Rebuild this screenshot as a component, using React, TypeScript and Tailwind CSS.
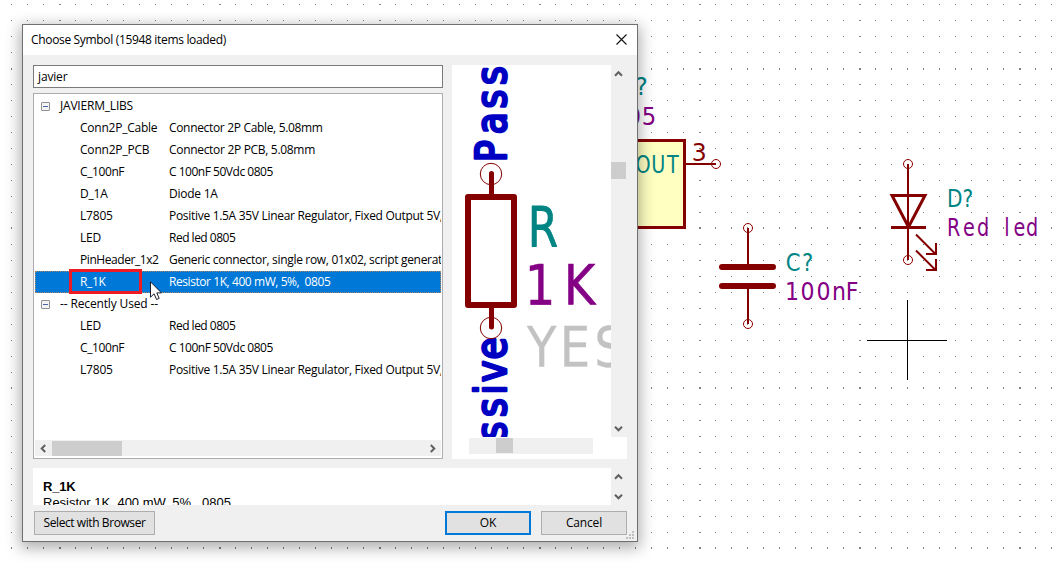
import type { ReactNode } from "react";

type Row = { name: string; desc?: string; nt?: string; dt?: string; group?: boolean; selected?: boolean };

const rows: Row[] = [
  { name: "JAVIERM_LIBS", group: true, nt: "tracking-[-0.2px]" },
  { name: "Conn2P_Cable", desc: "Connector 2P Cable, 5.08mm", nt: "tracking-[-0.24px]", dt: "tracking-[-0.33px]" },
  { name: "Conn2P_PCB", desc: "Connector 2P PCB, 5.08mm", dt: "tracking-[-0.31px]" },
  { name: "C_100nF", desc: "C 100nF 50Vdc 0805", nt: "tracking-[-0.4px]", dt: "tracking-[-0.48px]" },
  { name: "D_1A", desc: "Diode 1A", dt: "tracking-[-0.25px]" },
  { name: "L7805", desc: "Positive 1.5A 35V Linear Regulator, Fixed Output 5V,", dt: "tracking-[-0.3px]" },
  { name: "LED", desc: "Red led 0805", dt: "tracking-[-0.5px]" },
  { name: "PinHeader_1x2", desc: "Generic connector, single row, 01x02, script generated", nt: "tracking-[-0.43px]", dt: "tracking-[-0.32px]" },
  { name: "R_1K", desc: "Resistor 1K, 400 mW, 5%,\u00a0 0805", nt: "tracking-[-0.35px]", dt: "tracking-[-0.43px]", selected: true },
  { name: "-- Recently Used --", group: true, nt: "tracking-[-0.14px]" },
  { name: "LED", desc: "Red led 0805", dt: "tracking-[-0.5px]" },
  { name: "C_100nF", desc: "C 100nF 50Vdc 0805", nt: "tracking-[-0.4px]", dt: "tracking-[-0.48px]" },
  { name: "L7805", desc: "Positive 1.5A 35V Linear Regulator, Fixed Output 5V,", dt: "tracking-[-0.3px]" },
];

// Left side bearings of the label font, in em.
const bearing: Record<string, number> = {
  C: 0.056, "?": 0.07, "1": 0.11, "0": 0.066, n: 0.09, F: 0.098, D: 0.098, R: 0.098, e: 0.055, d: 0.055,
  l: 0.094, O: 0.056, U: 0.087, T: 0, "5": 0.08, "3": 0.076, K: 0.098, Y: 0, E: 0.098, S: 0.066, P: 0.098,
  a: 0.06, s: 0.054, i: 0.094, v: 0.03, " ": 0,
};

function Label({ text, at, y, size = 24, sx = 0.8, color, weight = 0, vertical = false }: {
  text: string; at: number[]; y: number; size?: number; sx?: number; color: string; weight?: number; vertical?: boolean;
}) {
  const xs = at.map((x, i) => (x / sx - (bearing[text[i]] ?? 0) * size).toFixed(2)).join(" ");
  const transform = vertical ? `translate(${y} 0) rotate(-90) scale(${sx} 1)` : `translate(0 ${y}) scale(${sx} 1)`;
  return (
    <text
      x={xs} y={0} transform={transform} fontSize={size} fill={color} stroke={color} strokeWidth={weight}
      strokeLinejoin="round" xmlSpace="preserve" className="font-['DejaVu_Sans',sans-serif]"
    >
      {text}
    </text>
  );
}

const dotXs = Array.from({ length: 66 }, (_, i) => 11 + i * 16);
const dotYs = Array.from({ length: 35 }, (_, i) => 4 + i * 16);

function Schematic() {
  return (
    <svg width="1053" height="563" className="block" fill="none" stroke="#840000">
      <g fill="#808080" stroke="none" shapeRendering="crispEdges">
        {dotYs.map((y) =>
          dotXs.map((x) => {
            const wide = x % 160 === 59;
            const tall = y % 160 === 68;
            return <rect key={`${x}-${y}`} x={x} y={tall && y > 68 ? y - 1 : y} width={wide ? 2 : 1} height={tall ? 2 : 1} />;
          }),
        )}
      </g>
      <rect x="560" y="140.5" width="124.5" height="87" fill="#ffffc2" strokeWidth="3" />
      <path d="M686 164H716" strokeWidth="2" />
      <circle cx="716" cy="164" r="4.5" />
      <Label text="?" at={[637]} y={95} sx={0.98} color="#008484" />
      <Label text="05" at={[628, 643.5]} y={125} sx={0.95} color="#840084" />
      <Label text="OUT" at={[636.5, 653, 667]} y={173} color="#008484" />
      <Label text="3" at={[693.5]} y={161} sx={0.98} color="#840000" />

      <path d="M748 228V264M748 289V324" strokeWidth="2" />
      <path d="M722 267H773M722 286H773" strokeWidth="6" strokeLinecap="round" />
      <circle cx="748" cy="228" r="4.5" />
      <circle cx="748" cy="324" r="4.5" />
      <Label text="C?" at={[787, 803.5]} y={270.5} sx={0.88} color="#008484" />
      <Label text="100nF" at={[787.5, 802, 818, 834, 848]} y={299.7} sx={0.92} color="#840084" />

      <path d="M908 164V260" strokeWidth="2" />
      <path d="M892 195.5H925L908.5 227Z" strokeWidth="3" strokeLinejoin="miter" />
      <path d="M891 227.5H926" strokeWidth="3" />
      <circle cx="908" cy="164" r="4.5" />
      <circle cx="908" cy="260" r="4.5" />
      <path d="M916 234.5L935.5 254M926 254H936V243M916 250.5L935.5 270M926 270H936V259" strokeWidth="2" />
      <Label text="D?" at={[949, 964]} y={206.7} sx={0.84} color="#008484" />
      <Label text="Red led" at={[949, 964, 978, 990, 1006, 1014.5, 1027]} y={236} color="#840084" />

      <path d="M867 340.5H947M907.5 300V380" stroke="#000" shapeRendering="crispEdges" />
    </svg>
  );
}

function Preview() {
  return (
    <svg width="159" height="372" viewBox="452 65 159 372" className="block bg-white" fill="none" stroke="#840000">
      <Label text="Pass" at={[-158.5, -132, -106.5, -83]} y={505.7} size={42} sx={0.86} weight={2.8} color="#0000c2" vertical />
      <Label text="ssive" at={[-438.5, -415, -391, -381, -357.5]} y={505.7} size={42} sx={0.86} weight={2.8} color="#0000c2" vertical />
      <circle cx="491" cy="174" r="10.7" strokeWidth="1" />
      <circle cx="491" cy="328" r="10.7" strokeWidth="1" />
      <path d="M491.5 173.5V196M491.5 306V327" strokeWidth="5" strokeLinecap="round" />
      <rect x="468" y="197" width="46" height="108" strokeWidth="6" strokeLinejoin="round" />
      <Label text="R" at={[532]} y={246} size={56} sx={0.78} weight={0.8} color="#008484" />
      <Label text="1K" at={[530, 568.5]} y={304} size={56} sx={0.86} weight={0.6} color="#840084" />
      <Label text="YES" at={[527, 564.5, 597.5]} y={365.5} size={56} sx={0.86} weight={0.3} color="#c2c2c2" />
    </svg>
  );
}

function Chevron({ dir }: { dir: "up" | "down" | "left" | "right" }) {
  const d = {
    up: "M1 5.7L4.5 2.2L8 5.7",
    down: "M1 2.8L4.5 6.3L8 2.8",
    left: "M6.2 1L2.7 4.5L6.2 8",
    right: "M2.8 1L6.3 4.5L2.8 8",
  }[dir];
  return (
    <svg width="9" height="9" viewBox="0 0 9 9" fill="none" stroke="#606060" strokeWidth="2">
      <path d={d} />
    </svg>
  );
}

function Button({ children, className }: { children: ReactNode; className: string }) {
  return <button className={`flex h-6 items-center justify-center bg-[#e1e1e1] pb-px ${className}`}>{children}</button>;
}

function TreeRow({ row }: { row: Row }) {
  if (row.group) {
    return (
      <div className="flex h-[22px] items-center pl-1.5">
        <span className="flex size-[9px] items-center justify-center rounded-[1px] border border-[#919191] bg-[#f4f4f4]">
          <span className="h-px w-[5px] bg-[#4b63a7]" />
        </span>
        <span className={`ml-2.5 pb-px whitespace-pre ${row.nt ?? "tracking-[-0.2px]"}`}>{row.name}</span>
      </div>
    );
  }
  return (
    <div
      className={`relative flex h-[22px] items-center pl-[45px] whitespace-pre ${
        row.selected ? "bg-[#0078d7] text-white outline-1 -outline-offset-1 outline-dotted outline-[#e58a3c]/75" : ""
      }`}
    >
      <span className={`w-[89px] shrink-0 pb-px ${row.nt ?? "tracking-[-0.2px]"}`}>{row.name}</span>
      <span className={`pb-px ${row.dt ?? "tracking-[-0.2px]"}`}>{row.desc}</span>
      {row.selected && (
        <>
          <span className="absolute -top-0.5 left-[34px] z-10 h-[25px] w-[73px] border-[3px] border-[#ed1c24]" />
          <svg className="absolute top-[10px] left-[115px] z-10" width="13" height="20" viewBox="0 0 13 20">
            <path d="M.5 .8V16.2L4.1 12.8L6.6 18.5L9.2 17.4L6.8 11.9H11.5Z" fill="#fff" stroke="#1c1c2c" />
          </svg>
        </>
      )}
    </div>
  );
}

function Dialog() {
  return (
    <div className="absolute top-6 left-[22px] flex h-[518px] w-[616px] flex-col border border-[#6f6f6f] bg-[#f0f0f0] text-[12px] leading-4 text-black shadow-[0_4px_14px_2px_rgba(0,0,0,0.32)]">
      <header className="flex h-[30px] shrink-0 items-center justify-between bg-white pr-2.5 pl-2">
        <span className="tracking-[-0.33px]">Choose Symbol (15948 items loaded)</span>
        <svg width="11" height="11" viewBox="0 0 11 11" fill="none" stroke="#111" strokeWidth="1.1" className="mb-px">
          <path d="M.5 .5L10.5 10.5M10.5 .5L.5 10.5" />
        </svg>
      </header>
      <div className="flex gap-[9px] pt-2.5 pl-2.5">
        <div className="flex w-[410px] flex-col gap-[5px]">
          <div className="flex h-[23px] items-center border border-[#7a7a7a] bg-white pl-1 tracking-[-0.15px]">javier</div>
          <div className="flex h-[366px] flex-col border border-[#abadb3] bg-white p-px">
            <div className="flex-1 overflow-hidden">
              {rows.map((row, i) => (
                <TreeRow key={i} row={row} />
              ))}
            </div>
            <div className="mb-px flex h-4 items-center justify-between bg-[#f0f0f0] pr-1 pl-1">
              <div className="flex h-full items-center gap-1">
                <Chevron dir="left" />
                <span className="h-[15px] w-[70px] bg-[#cdcdcd]" />
              </div>
              <Chevron dir="right" />
            </div>
          </div>
        </div>
        <div className="flex h-[394px] w-[175px] flex-col bg-white">
          <div className="flex h-[372px]">
            <Preview />
            <div className="flex w-4 flex-col items-center justify-between bg-[#f0f0f0] pt-[5px] pr-px pb-1">
              <Chevron dir="up" />
              <span className="mt-[83px] mb-auto h-[17px] w-[15px] self-start bg-[#cdcdcd]" />
              <Chevron dir="down" />
            </div>
          </div>
          <div className="mt-px ml-[17px] h-4 w-[124px] bg-[#f0f0f0] pl-[27px]">
            <div className="h-[15px] w-[17px] bg-[#cdcdcd]" />
          </div>
        </div>
      </div>
      <div className="mt-[9px] ml-2.5 flex h-[37px] shrink-0">
        <div className="w-[578px] overflow-hidden bg-white pt-[11px] pl-2.5 font-['Liberation_Sans',sans-serif] leading-4 whitespace-pre">
          <div className="text-[13px] font-bold tracking-[-0.2px]">R_1K</div>
          <div className="text-[13px]">Resistor 1K, 400 mW, 5%,  0805</div>
        </div>
        <div className="flex w-4 flex-col items-center justify-between pt-[5px] pr-px pb-1">
          <Chevron dir="up" />
          <Chevron dir="down" />
        </div>
      </div>
      <footer className="mt-1.5 flex pl-[11px]">
        <Button className="w-[121px] border border-[#adadad] tracking-[-0.42px]">Select with Browser</Button>
        <Button className="ml-[290px] w-[86px] border-2 border-[#0078d7] tracking-[-0.16px]">OK</Button>
        <Button className="ml-2.5 w-[86px] border border-[#adadad] tracking-[-0.16px]">Cancel</Button>
      </footer>
      <svg className="absolute right-[3px] bottom-[2px]" width="8" height="8" fill="#bfbfbf" shapeRendering="crispEdges">
        <path d="M6 0h2v2h-2zM3 3h2v2h-2zM6 3h2v2h-2zM0 6h2v2h-2zM3 6h2v2h-2zM6 6h2v2h-2z" />
      </svg>
    </div>
  );
}

export default function App() {
  return (
    <main className="relative h-[563px] w-[1053px] overflow-hidden bg-white font-['Open_Sans',sans-serif]">
      <Schematic />
      <Dialog />
    </main>
  );
}
